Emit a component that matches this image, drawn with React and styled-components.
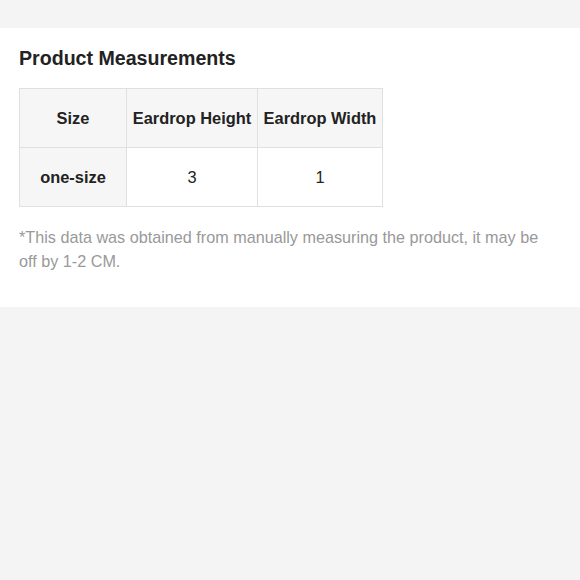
import styled, { createGlobalStyle } from "styled-components";

const GlobalStyle = createGlobalStyle`
  html, body {
    margin: 0;
    padding: 0;
    background: #f4f4f4;
    font-family: "Liberation Sans", Arial, sans-serif;
  }
`;

const Page = styled.div`
  padding-top: 28px;
  min-height: 580px;
  box-sizing: border-box;
`;

const Section = styled.section`
  background: #fff;
  padding: 18px 36px 34px 19px;
`;

const Title = styled.h2`
  margin: 0 0 18px;
  font-size: 19.6px;
  font-weight: 700;
  color: #222;
  line-height: 24px;
`;

const Table = styled.table`
  border-collapse: collapse;
  table-layout: fixed;
  width: 363px;
`;

const Th = styled.th`
  background: #f6f6f6;
  border: 1px solid #e0e0e0;
  height: 58px;
  padding: 0;
  font-size: 16.4px;
  font-weight: 700;
  color: #222;
  text-align: center;
  white-space: nowrap;
  width: ${(p) => p.w}px;
`;

const Td = styled.td`
  background: ${(p) => (p.head ? "#f6f6f6" : "#fff")};
  border: 1px solid #e0e0e0;
  height: 58px;
  padding: 0;
  font-size: 16.4px;
  font-weight: ${(p) => (p.head ? 700 : 400)};
  color: #222;
  text-align: center;
`;

const Note = styled.p`
  margin: 18px 0 0;
  font-size: 16.2px;
  line-height: 24px;
  color: #999;
`;

const App = () => {
  return (
    <Page>
      <GlobalStyle />
      <Section>
        <Title>Product Measurements</Title>
        <Table>
          <thead>
            <tr>
              <Th w={106}>Size</Th>
              <Th w={130}>Eardrop Height</Th>
              <Th w={124}>Eardrop Width</Th>
            </tr>
          </thead>
          <tbody>
            <tr>
              <Td head>one-size</Td>
              <Td>3</Td>
              <Td>1</Td>
            </tr>
          </tbody>
        </Table>
        <Note>
          *This data was obtained from manually measuring the product, it may be
          off by 1-2 CM.
        </Note>
      </Section>
    </Page>
  );
};

export default App;
